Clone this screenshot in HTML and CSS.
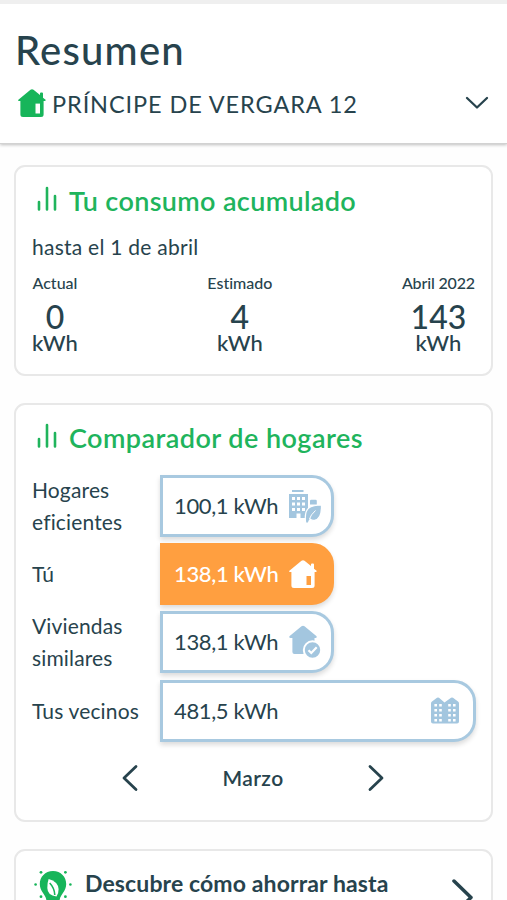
FILE: index.html
```html
<!DOCTYPE html>
<html lang="es">
<head>
    <meta charset="UTF-8">
    <meta name="viewport" content="width=device-width, initial-scale=1.0">
    <title>Resumen</title>
    <link rel="stylesheet" href="styles.css">
</head>
<body>
    <!-- Cabecera -->
    <header class="cabecera">
        <h1>Resumen</h1>
        <div class="vivienda">
            <svg class="icono-casa" viewBox="0 0 28 28" width="28" height="28">
                <path fill="#17b55a" d="M12.5.8 Q14 -.4 15.5.8 L22 6 V4.5 Q22 3.4 23 3.4 H24 Q25 3.4 25 4.5 V8.8 L27.6 10.8 Q28 12 26.8 12.1 H25.6 V25.5 Q25.6 28 23 28 H5 Q2.4 28 2.4 25.5 V12.1 H1 Q-.2 12 .4 10.8 Z"/>
                <path fill="#fff" d="M17.5 14.6 H22 V24.5 H17.5 Z"/>
            </svg>
            <span class="direccion">PRÍNCIPE DE VERGARA 12</span>
            <svg class="flecha-abajo" viewBox="0 0 24 14" width="24" height="14">
                <path d="M2 2 L12 11.5 L22 2"/>
            </svg>
        </div>
    </header>

    <main class="contenido">
        <!-- Consumo acumulado -->
        <section class="tarjeta consumo">
            <h2>
                <svg class="icono-barras" viewBox="0 0 20 26" width="20" height="26">
                    <path d="M2 16 V23.5 M10 2 V23.5 M18 10 V23.5"/>
                </svg>
                <span class="titulo-consumo">Tu consumo acumulado</span>
            </h2>
            <p class="fecha">hasta el 1 de abril</p>
            <div class="datos">
                <div class="dato">
                    <span class="etiqueta">Actual</span>
                    <span class="numero">0</span>
                    <span class="unidad">kWh</span>
                </div>
                <div class="dato">
                    <span class="etiqueta">Estimado</span>
                    <span class="numero">4</span>
                    <span class="unidad">kWh</span>
                </div>
                <div class="dato">
                    <span class="etiqueta">Abril 2022</span>
                    <span class="numero">143</span>
                    <span class="unidad">kWh</span>
                </div>
            </div>
        </section>

        <!-- Comparador -->
        <section class="tarjeta comparador">
            <h2>
                <svg class="icono-barras" viewBox="0 0 20 26" width="20" height="26">
                    <path d="M2 16 V23.5 M10 2 V23.5 M18 10 V23.5"/>
                </svg>
                <span class="titulo-comparador">Comparador de hogares</span>
            </h2>
            <div class="filas">
                <div class="nombre">Hogares<br>eficientes</div>
                <div class="barra">
                    <span>100,1 kWh</span>
                    <svg viewBox="0 0 34 34" width="34" height="34">
                        <path fill="#a3c6df" d="M4 1 H15.5 V3 H4 Z"/>
                        <path fill="#a3c6df" fill-rule="evenodd" d="M1 5 H20 V27 L17 29 H12.5 V24.5 H8.5 V29 H1 Z M4 8 V11 H7 V8 Z M9 8 V11 H12 V8 Z M14 8 V11 H17 V8 Z M4 13.5 V16.5 H7 V13.5 Z M9 13.5 V16.5 H12 V13.5 Z M14 13.5 V16.5 H17 V13.5 Z M4 19 V22 H7 V19 Z M9 19 V22 H12 V19 Z M14 19 V22 H17 V19 Z"/>
                        <path fill="#a3c6df" d="M22 12 Q22 10.7 23.3 10.7 H27.5 Q28.8 10.7 28.8 12 V15.5 H22 Z"/>
                        <path fill="#a3c6df" stroke="#fff" stroke-width="1.2" d="M17.7 34 Q16 22 21.5 18.5 Q25 16.2 33.4 16 Q34 30 26.5 31.3 Q24 31.7 22.3 30.2 Q20.8 32 20.4 34 Z"/>
                        <path fill="none" stroke="#fff" stroke-width="1" d="M21.5 30 Q22.5 26 27.5 21.5"/>
                    </svg>
                </div>

                <div class="nombre">Tú</div>
                <div class="barra activa">
                    <span>138,1 kWh</span>
                    <svg class="casa-activa" viewBox="0 0 28 28" width="28" height="28">
                        <path fill="#fff" d="M12.5.8 Q14 -.4 15.5.8 L22 6 V4.5 Q22 3.4 23 3.4 H24 Q25 3.4 25 4.5 V8.8 L27.6 10.8 Q28 12 26.8 12.1 H25.6 V25.5 Q25.6 28 23 28 H5 Q2.4 28 2.4 25.5 V12.1 H1 Q-.2 12 .4 10.8 Z"/>
                        <path fill="#ff9f40" d="M17.5 16 H22 V25 H17.5 Z"/>
                    </svg>
                </div>

                <div class="nombre">Viviendas<br>similares</div>
                <div class="barra">
                    <span>138,1 kWh</span>
                    <svg viewBox="0 0 34 34" width="34" height="34">
                        <path fill="#a3c6df" d="M13.5 1.3 Q15 0 16.5 1.3 L28.6 11.3 Q29.4 12.8 27.5 13 H26.5 V29 H6.5 Q4.4 29 4.4 27 V13 H2.5 Q.6 12.8 1.4 11.3 Z"/>
                        <circle cx="24.5" cy="25" r="8.7" fill="#a3c6df" stroke="#fff" stroke-width="2"/>
                        <path fill="none" stroke="#fff" stroke-width="2.2" d="M20.5 25.2 L23.3 28 L28.7 22.3"/>
                    </svg>
                </div>

                <div class="nombre">Tus vecinos</div>
                <div class="barra larga">
                    <span>481,5 kWh</span>
                    <svg class="edificios" viewBox="0 0 28 27" width="28" height="27">
                        <path fill="#a3c6df" d="M0 6.5 Q0 5.2 1 4.5 L6 .8 Q7 .1 8 .8 L13.5 5.5 L20 .8 Q21 .1 22 .8 L27 4.5 Q28 5.2 28 6.5 V24.5 Q28 26.5 26 26.5 H2 Q0 26.5 0 24.5 Z"/>
                        <path fill="none" stroke="#fff" stroke-width="2.6" stroke-dasharray="2.6 2.4" d="M4.7 7 V25 M9.5 7 V25 M18.5 7 V25 M23.3 7 V25"/>
                    </svg>
                </div>
            </div>
            <div class="mes">
                <svg class="flecha-mes" viewBox="0 0 16 28" width="16" height="28">
                    <path d="M14 2.5 L2 14 L14 25.5"/>
                </svg>
                <span>Marzo</span>
                <svg class="flecha-mes" viewBox="0 0 16 28" width="16" height="28">
                    <path d="M2 2.5 L14 14 L2 25.5"/>
                </svg>
            </div>
        </section>

        <!-- Consejo de ahorro -->
        <section class="tarjeta ahorro">
            <svg class="bombilla" viewBox="0 0 38 42" width="38" height="42">
                <path fill="#17b55a" d="M19 2 C27 2 32.2 8 32.2 15 C32.2 23 26 25 25.5 32 H12.5 C12 25 5.8 23 5.8 15 C5.8 8 11 2 19 2 Z"/>
                <path fill="#fff" d="M14.6 10 Q24 12.5 24.6 20 Q24.8 24 22.5 27.5 Q13.5 26.5 13.3 19 Q13.2 14 14.6 10 Z"/>
                <path fill="none" stroke="#17b55a" stroke-width="1.6" d="M15.7 14 Q20.5 19 20.8 26"/>
                <g fill="#17b55a">
                    <circle cx="1.6" cy="15.5" r="1.3"/>
                    <circle cx="36.4" cy="15.5" r="1.3"/>
                    <circle cx="7" cy="3.3" r="1.4"/>
                    <circle cx="31.4" cy="3.3" r="1.4"/>
                    <circle cx="7" cy="27.7" r="1.4"/>
                    <circle cx="31.4" cy="27.7" r="1.4"/>
                </g>
            </svg>
            <strong>Descubre cómo ahorrar hasta</strong>
            <svg class="flecha-ahorro" viewBox="0 0 22 38" width="22" height="38">
                <path d="M2 2 L19 18.5 L2 35"/>
            </svg>
        </section>
    </main>
</body>
</html>
```
FILE: styles.css
```css
/* Estilos generales */
* {
    box-sizing: border-box;
}

body {
    margin: 0;
    height: 900px;
    overflow: hidden;
    background-color: #fefefe;
    font-family: Lato, "Open Sans", sans-serif;
    font-variant-ligatures: none;
    color: #27434d;
}

h1, h2, p {
    margin: 0;
}

svg {
    display: block;
    flex-shrink: 0;
}

/* Cabecera */
.cabecera {
    height: 144px;
    padding: 23px 18px 0 15px;
    background-color: #fff;
    border-top: 4px solid #efefef;
    border-bottom: 1px solid #d2d2d2;
    box-shadow: 0 1px 3px rgba(0, 0, 0, 0.25);
}

h1 {
    font-size: 40px;
    font-weight: 500;
    line-height: 46px;
    letter-spacing: 1.2px;
}

.vivienda {
    display: flex;
    align-items: center;
    height: 30px;
    margin-top: 15px;
    padding-left: 3px;
}

.direccion {
    margin: 1px 0 0 6px;
    font-size: 23.5px;
    letter-spacing: 0.9px;
    white-space: nowrap;
}

.flecha-abajo {
    margin-left: auto;
}

.flecha-abajo path,
.flecha-mes path,
.flecha-ahorro path {
    fill: none;
    stroke: #27434d;
    stroke-width: 2.3;
    stroke-linecap: round;
    stroke-linejoin: round;
}

/* Tarjetas */
.contenido {
    display: flex;
    flex-direction: column;
    gap: 27px;
    padding: 21px 14px 0;
}

.tarjeta {
    padding: 0 16px;
    background-color: #fff;
    border: 2px solid #e8e8e8;
    border-radius: 11px;
}

h2 {
    display: flex;
    align-items: center;
    gap: 12px;
    height: 32px;
    padding-left: 5px;
    color: #20b45c;
    font-size: 27px;
    font-weight: 600;
    line-height: 32px;
    letter-spacing: 0.35px;
    white-space: nowrap;
}

.titulo-comparador {
    letter-spacing: 0.45px;
}

.icono-barras {
    margin-top: -5px;
}

.icono-barras path {
    fill: none;
    stroke: #20b45c;
    stroke-width: 2.6;
    stroke-linecap: round;
}

/* Consumo */
.consumo {
    height: 211px;
    padding-top: 18px;
}

.fecha {
    margin-top: 16px;
    font-size: 21px;
    line-height: 28px;
    letter-spacing: 0.25px;
}

.datos {
    display: flex;
    justify-content: space-between;
    margin-top: 12px;
}

.dato {
    display: flex;
    flex-direction: column;
    align-items: center;
}

.etiqueta {
    font-size: 16px;
    font-weight: 500;
    line-height: 20px;
}

.dato:last-child .etiqueta {
    letter-spacing: -0.15px;
}

.numero {
    margin-top: 6px;
    font-size: 32px;
    font-weight: 500;
    line-height: 36px;
}

.unidad {
    font-size: 22px;
    font-weight: 500;
    line-height: 16px;
}

/* Comparador */
.comparador {
    height: 419px;
    padding-top: 17px;
}

.filas {
    display: grid;
    grid-template-columns: 128px 1fr;
    grid-template-rows: 63px 61px 62px 62px;
    row-gap: 6.5px;
    align-items: center;
    margin-top: 20px;
    font-size: 21px;
}

.nombre {
    line-height: 32px;
    letter-spacing: 0.15px;
    white-space: nowrap;
}

.barra {
    display: flex;
    align-items: center;
    justify-content: space-between;
    width: 174px;
    height: 62px;
    padding: 0 9px 0 11px;
    background-color: #fff;
    border: 3px solid #a8c9e0;
    border-radius: 0 22px 22px 0;
    box-shadow: 0 3px 5px rgba(0, 0, 0, 0.14);
    font-size: 22px;
    letter-spacing: -0.35px;
    white-space: nowrap;
}

.barra span {
    margin-top: -1px;
}

.barra.larga {
    width: 316px;
    padding-right: 14px;
}

.barra.activa {
    background-color: #ff9f40;
    border-color: #ff9f40;
    color: #fff;
    font-weight: 500;
}

.casa-activa {
    margin-right: 5px;
}

/* Selector de mes */
.mes {
    display: flex;
    align-items: center;
    justify-content: space-between;
    width: 262px;
    margin: 22px auto 0 90px;
    font-size: 21px;
    font-weight: 600;
    letter-spacing: 0.4px;
}

.flecha-mes path {
    stroke-width: 2.8;
}

/* Ahorro */
.ahorro {
    display: flex;
    align-items: flex-start;
    height: 110px;
    padding-top: 15px;
}

.bombilla {
    margin: 3px 0 0 2px;
}

.ahorro strong {
    margin-left: 13px;
    font-size: 23px;
    font-weight: 700;
    line-height: 34px;
    letter-spacing: 0.12px;
    white-space: nowrap;
}

.flecha-ahorro {
    margin: 13px 1px 0 auto;
}

.flecha-ahorro path {
    stroke-width: 3.5;
}
```
